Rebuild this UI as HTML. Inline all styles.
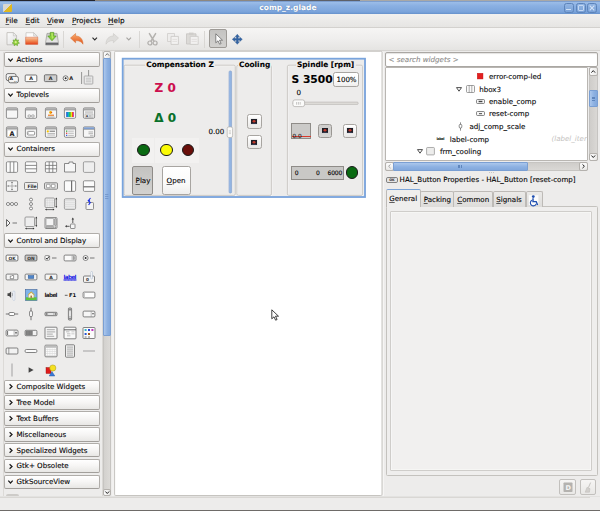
<!DOCTYPE html>
<html><head><meta charset="utf-8"><title>comp_z.glade</title>
<style>
html,body{margin:0;padding:0;}
body{width:600px;height:511px;overflow:hidden;background:#edeceb;position:relative;font-family:"DejaVu Sans","Liberation Sans",sans-serif;font-size:7.1px;color:#000;}
div,span,svg{position:absolute;box-sizing:border-box;}
svg{overflow:visible;}
svg text{font-family:"DejaVu Sans","Liberation Sans",sans-serif;}
.t{-webkit-text-stroke:0.1px currentColor;white-space:nowrap;line-height:10px;height:10px;margin-top:-5px;font-size:7.1px;}
.b{font-weight:bold;}
.hdr{border:1px solid #b0ada9;border-bottom-color:#a29f9b;border-radius:2px;background:linear-gradient(#ffffff,#f6f5f4 50%,#e8e7e5);}
.btn{border:1px solid #a8a5a1;border-radius:2.5px;background:linear-gradient(#ffffff,#f4f3f2 60%,#e8e7e5);}
.btnp{border:1px solid #8f8c88;border-radius:2px;background:linear-gradient(#c4c3c1,#d2d1cf);}
u{text-decoration:underline;text-underline-offset:1px;text-decoration-thickness:0.6px;text-decoration-color:rgba(0,0,0,0.6);}
</style></head>
<body>
<div style="left:0px;top:0px;width:600px;height:1px;background:linear-gradient(90deg,#23252c 0,#23252c 95px,#8d877f 95px,#8d877f 273px,#5d6068 273px,#5d6068 360px,#a9a8a6 360px);"></div>
<div style="left:0px;top:1px;width:600px;height:13px;background:linear-gradient(#9cbde8,#8ab0e2 35%,#7ca5dc 85%,#719cd5);border-top:1px solid #7d9fd0;border-bottom:1px solid #6a95cf;"></div>
<span class="t" style="left:259.3px;top:8.0px;color:#fff;font-weight:bold;font-size:7.5px;text-shadow:0 0 1px #3c5f94;">comp_z.glade</span>
<div style="left:3px;top:4px;width:9px;height:8px;background:linear-gradient(135deg,#d9d7d2 50%,#e0b820 50%);border-radius:1px;"></div>
<div style="left:564px;top:3px;width:10px;height:10px;border:1px solid #5d84ba;border-radius:2.5px;background:linear-gradient(#92b5e3,#7aa2d8);"></div>
<div style="left:576px;top:3px;width:10px;height:10px;border:1px solid #5d84ba;border-radius:2.5px;background:linear-gradient(#92b5e3,#7aa2d8);"></div>
<div style="left:587px;top:3px;width:10px;height:10px;border:1px solid #5d84ba;border-radius:2.5px;background:linear-gradient(#92b5e3,#7aa2d8);"></div>
<div style="left:566px;top:9px;width:5px;height:1px;background:#cfe0f5;"></div>
<div style="left:578px;top:5px;width:6px;height:6px;border:1px solid #c3d7f2;border-radius:1px;"></div>
<svg style="left:589px;top:5px" width="6" height="6" viewBox="0 0 6 6"><path d="M0.7 0.7L5.3 5.3M5.3 0.7L0.7 5.3" stroke="#d3e2f6" stroke-width="1.1" fill="none"/></svg>
<div style="left:0px;top:14px;width:600px;height:13.5px;background:linear-gradient(#f1f0ef,#e6e5e3);border-bottom:1px solid #d3d1ce;"></div>
<span class="t" style="left:5.5px;top:21.4px;font-size:7.3px;"><u>F</u>ile</span>
<span class="t" style="left:25.5px;top:21.4px;font-size:7.3px;"><u>E</u>dit</span>
<span class="t" style="left:47px;top:21.4px;font-size:7.3px;"><u>V</u>iew</span>
<span class="t" style="left:72px;top:21.4px;font-size:7.3px;"><u>P</u>rojects</span>
<span class="t" style="left:108px;top:21.4px;font-size:7.3px;"><u>H</u>elp</span>
<div style="left:0px;top:27.5px;width:600px;height:23px;background:linear-gradient(#f6f5f4,#efeeed 50%,#e5e4e2);border-bottom:1px solid #d6d4d1;"></div>
<svg style="left:5.6px;top:32px" width="13" height="14" viewBox="0 0 13 14"><defs><linearGradient id="pg" x1="0" y1="0" x2="1" y2="1"><stop offset="0" stop-color="#fdfdfd"/><stop offset="1" stop-color="#dedede"/></linearGradient></defs>
<path d="M1 0.6h6.4l3.2 3.2v9h-9.6z" fill="url(#pg)" stroke="#b4b2ae" stroke-width="0.7"/><path d="M7.4 0.6v3.2h3.2z" fill="#f2f2f2" stroke="#b4b2ae" stroke-width="0.5"/>
<path d="M9.6 6.6l1 1.9l2 -0.6l-0.7 2l1.6 1.2l-1.9 0.6l-0.1 2l-1.7 -1.1l-1.7 1.1l-0.1 -2l-1.9 -0.6l1.6 -1.2l-0.7 -2l2 0.6z" fill="#8fce3e" stroke="#5b9a1c" stroke-width="0.5"/><circle cx="9.7" cy="10.2" r="1.1" fill="#d8f08a"/></svg>
<svg style="left:25px;top:32.4px" width="14" height="13" viewBox="0 0 14 13"><defs><linearGradient id="fo" x1="0" y1="0" x2="0" y2="1"><stop offset="0" stop-color="#f6c8a6"/><stop offset="0.5" stop-color="#f08a54"/><stop offset="1" stop-color="#e5411a"/></linearGradient></defs>
<path d="M1 0.7h7.6l3.6 3.4v8h-11.2z" fill="#fbfbfb" stroke="#b9b7b3" stroke-width="0.6"/><path d="M8.6 0.7v3.4h3.6z" fill="#ededed" stroke="#b9b7b3" stroke-width="0.5"/>
<path d="M0.6 5.2h12.2v7.2h-12.2z" fill="url(#fo)" stroke="#d8502a" stroke-width="0.4"/></svg>
<svg style="left:44.6px;top:31.6px" width="14" height="14" viewBox="0 0 14 14"><defs><linearGradient id="dv" x1="0" y1="0" x2="0" y2="1"><stop offset="0" stop-color="#c9c9c7"/><stop offset="1" stop-color="#f0f0ef"/></linearGradient></defs>
<path d="M2 1.4h10l1.4 9v2.6h-12.8v-2.6z" fill="url(#dv)" stroke="#8e8e8a" stroke-width="0.6"/>
<path d="M0.8 10.6h12.4v2.2h-12.4z" fill="#55555a"/><path d="M1.4 11.9h11.2" stroke="#9a9a9a" stroke-width="0.4"/>
<path d="M5.2 0.4h3.6v3.6h2.4l-4.2 4.8l-4.2 -4.8h2.4z" fill="#86cf3a" stroke="#4c9418" stroke-width="0.6" stroke-linejoin="round"/><path d="M6.2 1.2h1.6v3.6h1.2l-2 2.3z" fill="#c8ee70" opacity="0.8"/></svg>
<div style="left:63px;top:31px;width:1px;height:17px;background:#d9d7d4;"></div>
<svg style="left:70.4px;top:32.6px" width="14" height="12" viewBox="0 0 14 12"><defs><linearGradient id="ud" x1="0" y1="0" x2="0" y2="1"><stop offset="0" stop-color="#f8b070"/><stop offset="1" stop-color="#e2501a"/></linearGradient></defs>
<path d="M0.5 5L5.6 0.5V3C10 3 13 6 13 11.2C11.5 8.8 9.5 7.6 5.6 7.6V9.8Z" fill="url(#ud)" stroke="#d66a2a" stroke-width="0.5" stroke-linejoin="round"/></svg>
<svg style="left:91.5px;top:36.5px" width="5.5" height="4" viewBox="0 0 5.5 4"><path d="M0.5 0.7L2.75 3L5 0.7" stroke="#2a2a2a" stroke-width="1.1" fill="none"/></svg>
<svg style="left:105.4px;top:32.6px" width="14" height="12" viewBox="0 0 14 12"><path d="M13.5 5L8.4 0.5V3C4 3 1 6 1 11.2C2.5 8.8 4.5 7.6 8.4 7.6V9.8Z" fill="#dedddb" stroke="#c6c4c1" stroke-width="0.5" stroke-linejoin="round"/></svg>
<svg style="left:126px;top:36.5px" width="5.5" height="4" viewBox="0 0 5.5 4"><path d="M0.5 0.7L2.75 3L5 0.7" stroke="#a5a3a0" stroke-width="1.1" fill="none"/></svg>
<div style="left:139px;top:31px;width:1px;height:17px;background:#d9d7d4;"></div>
<svg style="left:147.4px;top:32.6px" width="11" height="13" viewBox="0 0 11 13"><path d="M2.4 0.6L6.9 8M8.6 0.6L4.1 8" stroke="#b4b2af" stroke-width="1.5" fill="none" stroke-linecap="round"/>
<circle cx="2.9" cy="10" r="2" fill="none" stroke="#b0aeab" stroke-width="1.2"/><circle cx="8.1" cy="10" r="2" fill="none" stroke="#b0aeab" stroke-width="1.2"/></svg>
<svg style="left:166.8px;top:33px" width="12" height="12" viewBox="0 0 12 12"><path d="M0.5 0.5h7v8h-7z" fill="#eeedec" stroke="#cfcdca" stroke-width="0.8"/><path d="M4 3.4h7.4v8h-7.4z" fill="#f3f2f1" stroke="#c9c7c4" stroke-width="0.8"/><path d="M5.4 6.4h4.6M5.4 8.4h4.6" stroke="#d6d4d1" stroke-width="0.6"/></svg>
<svg style="left:185.6px;top:32.4px" width="13" height="13" viewBox="0 0 13 13"><path d="M0.5 1.8h9.5v10.2h-9.5z" fill="#dcdad7" stroke="#c6c4c1" stroke-width="0.8"/><path d="M3 0.6h4.5v2.2h-4.5z" fill="#cfcdca"/><path d="M4.2 4.4h8v8h-8z" fill="#f2f1f0" stroke="#cbc9c6" stroke-width="0.8"/><path d="M5.6 7.4h5.2M5.6 9.4h5.2" stroke="#d6d4d1" stroke-width="0.6"/></svg>
<div style="left:204px;top:31px;width:1px;height:17px;background:#d9d7d4;"></div>
<div class="btnp" style="left:209px;top:29px;width:18px;height:18.5px;border-color:#9d9a96;"></div>
<svg style="left:215px;top:33px" width="8" height="12" viewBox="0 0 8 12"><path d="M0.8 0.8v9l2.2 -2l1.6 3.4l1.5 -0.7l-1.6 -3.3h3z" fill="#fdfdfd" stroke="#5a5a5a" stroke-width="0.7" stroke-linejoin="round"/></svg>
<svg style="left:232.2px;top:33.7px" width="10.6" height="10.6" viewBox="0 0 12 12"><path d="M6 0.3l2.4 2.8h-1.4v1.9h1.9v-1.4l2.8 2.4l-2.8 2.4v-1.4h-1.9v1.9h1.4l-2.4 2.8l-2.4 -2.8h1.4v-1.9h-1.9v1.4l-2.8 -2.4l2.8 -2.4v1.4h1.9v-1.9h-1.4z" fill="#3465a4" stroke="#204a87" stroke-width="0.4"/></svg>
<div style="left:2.5px;top:51.5px;width:1px;height:445px;background:#dcdad7;"></div>
<div class="hdr" style="left:4px;top:52.2px;width:96px;height:15.0px;"></div>
<svg style="left:8px;top:58.05px" width="5" height="4" viewBox="0 0 5 4"><path d="M0.3 0.6L2.5 3L4.7 0.6" stroke="#1a1a1a" stroke-width="1.25" fill="none"/></svg>
<span class="t" style="left:16.5px;top:60.05px;font-size:7.1px;">Actions</span>
<div class="hdr" style="left:4px;top:87.5px;width:96px;height:15.0px;"></div>
<svg style="left:8px;top:93.35px" width="5" height="4" viewBox="0 0 5 4"><path d="M0.3 0.6L2.5 3L4.7 0.6" stroke="#1a1a1a" stroke-width="1.25" fill="none"/></svg>
<span class="t" style="left:16.5px;top:95.35px;font-size:7.1px;">Toplevels</span>
<div class="hdr" style="left:4px;top:141.5px;width:96px;height:15.0px;"></div>
<svg style="left:8px;top:147.35000000000002px" width="5" height="4" viewBox="0 0 5 4"><path d="M0.3 0.6L2.5 3L4.7 0.6" stroke="#1a1a1a" stroke-width="1.25" fill="none"/></svg>
<span class="t" style="left:16.5px;top:149.35px;font-size:7.1px;">Containers</span>
<div class="hdr" style="left:4px;top:232.7px;width:96px;height:15.0px;"></div>
<svg style="left:8px;top:238.55px" width="5" height="4" viewBox="0 0 5 4"><path d="M0.3 0.6L2.5 3L4.7 0.6" stroke="#1a1a1a" stroke-width="1.25" fill="none"/></svg>
<span class="t" style="left:16.5px;top:240.55px;font-size:7.1px;">Control and Display</span>
<div class="hdr" style="left:4px;top:379.5px;width:96px;height:14.5px;"></div>
<svg style="left:8.8px;top:384.40000000000003px" width="4" height="5" viewBox="0 0 4 5"><path d="M0.6 0.3L3 2.5L0.6 4.7" stroke="#1a1a1a" stroke-width="1.25" fill="none"/></svg>
<span class="t" style="left:16.5px;top:387.1px;font-size:7.1px;">Composite Widgets</span>
<div class="hdr" style="left:4px;top:395.35px;width:96px;height:14.5px;"></div>
<svg style="left:8.8px;top:400.25000000000006px" width="4" height="5" viewBox="0 0 4 5"><path d="M0.6 0.3L3 2.5L0.6 4.7" stroke="#1a1a1a" stroke-width="1.25" fill="none"/></svg>
<span class="t" style="left:16.5px;top:402.95px;font-size:7.1px;">Tree Model</span>
<div class="hdr" style="left:4px;top:411.2px;width:96px;height:14.5px;"></div>
<svg style="left:8.8px;top:416.1px" width="4" height="5" viewBox="0 0 4 5"><path d="M0.6 0.3L3 2.5L0.6 4.7" stroke="#1a1a1a" stroke-width="1.25" fill="none"/></svg>
<span class="t" style="left:16.5px;top:418.8px;font-size:7.1px;">Text Buffers</span>
<div class="hdr" style="left:4px;top:427.05px;width:96px;height:14.5px;"></div>
<svg style="left:8.8px;top:431.95000000000005px" width="4" height="5" viewBox="0 0 4 5"><path d="M0.6 0.3L3 2.5L0.6 4.7" stroke="#1a1a1a" stroke-width="1.25" fill="none"/></svg>
<span class="t" style="left:16.5px;top:434.65px;font-size:7.1px;">Miscellaneous</span>
<div class="hdr" style="left:4px;top:442.9px;width:96px;height:14.5px;"></div>
<svg style="left:8.8px;top:447.8px" width="4" height="5" viewBox="0 0 4 5"><path d="M0.6 0.3L3 2.5L0.6 4.7" stroke="#1a1a1a" stroke-width="1.25" fill="none"/></svg>
<span class="t" style="left:16.5px;top:450.5px;font-size:7.1px;">Specialized Widgets</span>
<div class="hdr" style="left:4px;top:458.75px;width:96px;height:14.5px;"></div>
<svg style="left:8.8px;top:463.65000000000003px" width="4" height="5" viewBox="0 0 4 5"><path d="M0.6 0.3L3 2.5L0.6 4.7" stroke="#1a1a1a" stroke-width="1.25" fill="none"/></svg>
<span class="t" style="left:16.5px;top:466.35px;font-size:7.1px;">Gtk+ Obsolete</span>
<div class="hdr" style="left:4px;top:474.59999999999997px;width:96px;height:14.5px;"></div>
<svg style="left:8px;top:480.2px" width="5" height="4" viewBox="0 0 5 4"><path d="M0.3 0.6L2.5 3L4.7 0.6" stroke="#1a1a1a" stroke-width="1.25" fill="none"/></svg>
<span class="t" style="left:16.5px;top:482.2px;font-size:7.1px;">GtkSourceView</span>
<div style="left:6px;top:494px;width:13px;height:2px;border-radius:2px 2px 0 0;background:#cdcbc8;"></div>
<div style="left:102px;top:51px;width:1px;height:445px;background:#dad8d5;"></div>
<div style="left:112px;top:51px;width:2px;height:445px;background:#f2f1f0;"></div>
<div style="left:103px;top:51px;width:8px;height:445px;background:linear-gradient(90deg,#d3d1ce,#dcdad7);border:1px solid #c6c4c1;border-radius:1.5px;"></div>
<div style="left:103px;top:51px;width:8px;height:7.5px;background:linear-gradient(90deg,#fdfdfd,#e9e8e6);border:1px solid #b4b1ad;border-radius:2px;"></div>
<svg style="left:104.8px;top:53.4px" width="4.5" height="3" viewBox="0 0 4.5 3"><path d="M0.4 2.6L2.25 0.6L4.1 2.6" stroke="#555" stroke-width="0.8" fill="none"/></svg>
<div style="left:103px;top:58px;width:8px;height:277.5px;background:linear-gradient(90deg,#abc7ec,#8db1e2 55%,#82a8dc);border:1px solid #7a9fd3;border-radius:1px;"></div>
<div style="left:103px;top:488.5px;width:8px;height:7.5px;background:linear-gradient(90deg,#fdfdfd,#e9e8e6);border:1px solid #b4b1ad;border-radius:2px;"></div>
<svg style="left:104.8px;top:491px" width="4.5" height="3" viewBox="0 0 4.5 3"><path d="M0.4 0.5L2.25 2.5L4.1 0.5" stroke="#222" stroke-width="1" fill="none"/></svg>
<svg style="left:105.4px;top:194.2px" width="3.4" height="1" viewBox="0 0 3.4 1"><rect x="0" y="0" width="3.4" height="0.7" fill="#6a8fc4"/></svg>
<svg style="left:105.4px;top:196.0px" width="3.4" height="1" viewBox="0 0 3.4 1"><rect x="0" y="0" width="3.4" height="0.7" fill="#6a8fc4"/></svg>
<svg style="left:105.4px;top:197.79999999999998px" width="3.4" height="1" viewBox="0 0 3.4 1"><rect x="0" y="0" width="3.4" height="0.7" fill="#6a8fc4"/></svg>
<svg style="left:5.3px;top:70.8px" width="14" height="14" viewBox="0 0 14 14"><rect x="1.2" y="2.6" width="9.8" height="7" rx="1.8" fill="#f4f4f4" stroke="#555" stroke-width="0.8"/><rect x="3.6" y="5.4" width="9.8" height="6.4" rx="1.8" fill="#f4f4f4" stroke="#555" stroke-width="0.8"/><text x="6.4" y="9.4" font-size="4.6" font-weight="bold" fill="#222" text-anchor="middle" >A</text><text x="10.4" y="11" font-size="3.6" font-weight="bold" fill="#222" text-anchor="middle" >..</text></svg>
<svg style="left:24.4px;top:70.8px" width="14" height="14" viewBox="0 0 14 14"><rect x="1.2" y="4" width="11.6" height="6.6" rx="1" fill="#fbfbfb" stroke="#555" stroke-width="0.8"/><text x="7" y="9.3" font-size="4.8" font-weight="bold" fill="#222" text-anchor="middle" >A</text></svg>
<svg style="left:43.6px;top:70.8px" width="14" height="14" viewBox="0 0 14 14"><rect x="0.4" y="3.8" width="12.4" height="6.8" rx="1" fill="#cfcfcf" stroke="#555" stroke-width="0.8"/><text x="6.6" y="9.2" font-size="4.8" font-weight="bold" fill="#222" text-anchor="middle" >A</text></svg>
<svg style="left:62.8px;top:70.8px" width="14" height="14" viewBox="0 0 14 14"><circle cx="2.6" cy="7.3" r="2.5" fill="#fff" stroke="#444" stroke-width="0.7"/><circle cx="2.6" cy="7.3" r="1" fill="#222"/><text x="8.2" y="9.2" font-size="5" font-weight="bold" fill="#222" text-anchor="middle" >A</text></svg>
<svg style="left:81.9px;top:70.8px" width="14" height="14" viewBox="0 0 14 14"><path d="M-0.4 1L-0.4 13" stroke="#8a8a8a" stroke-width="0.9" fill="none"/><path d="M6.6 -1L6.6 5" stroke="#8a8a8a" stroke-width="0.9" fill="none"/><rect x="2.2" y="5" width="8.6" height="8" rx="0.5" fill="#efefef" stroke="#9a9a9a" stroke-width="0.8"/><path d="M3.8 7.2L9.4 7.2" stroke="#aaa" stroke-width="0.7" fill="none"/><path d="M3.8 9L9.4 9" stroke="#aaa" stroke-width="0.7" fill="none"/><path d="M3.8 10.8L9.4 10.8" stroke="#aaa" stroke-width="0.7" fill="none"/></svg>
<svg style="left:5.3px;top:106.4px" width="14" height="14" viewBox="0 0 14 14"><rect x="1.4" y="1.9" width="11.2" height="10.4" rx="1.2" fill="#f6f6f6" stroke="#777" stroke-width="0.8"/><path d="M1.8 2.3h10.4v1.6h-10.4z" fill="#a8a8a8"/><path d="M1.4 4.1L12.6 4.1" stroke="#8a8a8a" stroke-width="0.6" fill="none"/></svg>
<svg style="left:24.4px;top:106.4px" width="14" height="14" viewBox="0 0 14 14"><rect x="1.4" y="1.9" width="11.2" height="10.4" rx="1.2" fill="#f6f6f6" stroke="#777" stroke-width="0.8"/><path d="M1.8 2.3h10.4v1.6h-10.4z" fill="#a8a8a8"/><path d="M1.4 4.1L12.6 4.1" stroke="#8a8a8a" stroke-width="0.6" fill="none"/><rect x="4" y="9" width="2.6" height="2" rx="0.8" fill="#fff" stroke="#6f6f6f" stroke-width="0.6"/><rect x="7.6" y="9" width="2.6" height="2" rx="0.8" fill="#fff" stroke="#6f6f6f" stroke-width="0.6"/></svg>
<svg style="left:43.6px;top:106.4px" width="14" height="14" viewBox="0 0 14 14"><rect x="1.4" y="1.9" width="11.2" height="10.4" rx="1.2" fill="#f6f6f6" stroke="#777" stroke-width="0.8"/><path d="M1.8 2.3h10.4v1.6h-10.4z" fill="#a8a8a8"/><path d="M1.4 4.1L12.6 4.1" stroke="#8a8a8a" stroke-width="0.6" fill="none"/><circle cx="6.6" cy="6.5" r="1.4" fill="#f5b400"/><path d="M6.8 5.8l1.8 0.7l-1.8 0.8z" fill="#e0421a"/><rect x="4" y="8.6" width="6" height="1.3" fill="#e98a3c"/><rect x="3.4" y="10.6" width="7.2" height="1" fill="#aaa"/></svg>
<svg style="left:62.8px;top:106.4px" width="14" height="14" viewBox="0 0 14 14"><rect x="1.4" y="1.9" width="11.2" height="10.4" rx="1.2" fill="#f6f6f6" stroke="#777" stroke-width="0.8"/><path d="M1.8 2.3h10.4v1.6h-10.4z" fill="#a8a8a8"/><path d="M1.4 4.1L12.6 4.1" stroke="#8a8a8a" stroke-width="0.6" fill="none"/><defs><linearGradient id="rb" x1="0" x2="1"><stop offset="0" stop-color="#1d4ed8"/><stop offset="0.3" stop-color="#10b3c8"/><stop offset="0.5" stop-color="#35c22e"/><stop offset="0.7" stop-color="#f0e020"/><stop offset="0.85" stop-color="#f03a1a"/><stop offset="1" stop-color="#c010c0"/></linearGradient></defs><rect x="3.2" y="6" width="7.6" height="5" fill="url(#rb)"/></svg>
<svg style="left:81.9px;top:106.4px" width="14" height="14" viewBox="0 0 14 14"><rect x="1.4" y="1.9" width="11.2" height="10.4" rx="1.2" fill="#f6f6f6" stroke="#777" stroke-width="0.8"/><path d="M1.8 2.3h10.4v1.6h-10.4z" fill="#a8a8a8"/><path d="M1.4 4.1L12.6 4.1" stroke="#8a8a8a" stroke-width="0.6" fill="none"/><rect x="3" y="5.2" width="8" height="2.2" fill="#cfcfcf"/><rect x="3" y="8" width="8" height="3.2" fill="#e4e4e4" stroke="#999" stroke-width="0.4"/><text x="5" y="10.8" font-size="2.6" font-weight="bold" fill="#222" text-anchor="middle" >A</text><path d="M7 10L9.5 10" stroke="#777" stroke-width="0.6" fill="none"/></svg>
<svg style="left:5.3px;top:125.0px" width="14" height="14" viewBox="0 0 14 14"><rect x="1.4" y="1.9" width="11.2" height="10.4" rx="1.2" fill="#f6f6f6" stroke="#777" stroke-width="0.8"/><path d="M1.8 2.3h10.4v1.6h-10.4z" fill="#a8a8a8"/><path d="M1.4 4.1L12.6 4.1" stroke="#8a8a8a" stroke-width="0.6" fill="none"/><rect x="2.5" y="5" width="9" height="6.5" rx="0" fill="#fff" stroke="#aaa" stroke-width="0.4"/><text x="7" y="11" font-size="6.5" font-weight="bold" fill="#222" text-anchor="middle" >A</text></svg>
<svg style="left:24.4px;top:125.0px" width="14" height="14" viewBox="0 0 14 14"><rect x="1.4" y="1.9" width="11.2" height="10.4" rx="1.2" fill="#f6f6f6" stroke="#777" stroke-width="0.8"/><path d="M1.8 2.3h10.4v1.6h-10.4z" fill="#a8a8a8"/><path d="M1.4 4.1L12.6 4.1" stroke="#8a8a8a" stroke-width="0.6" fill="none"/><rect x="3.4" y="6.4" width="7.2" height="3.6" rx="1" fill="#fff" stroke="#6f6f6f" stroke-width="0.7"/><path d="M4.6 7.3L4.6 9.2" stroke="#888" stroke-width="0.5" fill="none"/></svg>
<svg style="left:43.6px;top:125.0px" width="14" height="14" viewBox="0 0 14 14"><rect x="1.4" y="1.9" width="11.2" height="10.4" rx="1.2" fill="#f6f6f6" stroke="#777" stroke-width="0.8"/><path d="M1.8 2.3h10.4v1.6h-10.4z" fill="#a8a8a8"/><path d="M1.4 4.1L12.6 4.1" stroke="#8a8a8a" stroke-width="0.6" fill="none"/><circle cx="3.8" cy="6.4" r="1.1" fill="#f5c400"/><rect x="5.6" y="5.6" width="5.4" height="1.4" fill="#999"/><rect x="3.4" y="8" width="7.6" height="0.9" fill="#b5b5b5"/><rect x="3.4" y="9.6" width="7.6" height="0.9" fill="#b5b5b5"/></svg>
<svg style="left:62.8px;top:125.0px" width="14" height="14" viewBox="0 0 14 14"><rect x="1.4" y="1.9" width="11.2" height="10.4" rx="1.2" fill="#f6f6f6" stroke="#777" stroke-width="0.8"/><path d="M1.8 2.3h10.4v1.6h-10.4z" fill="#a8a8a8"/><path d="M1.4 4.1L12.6 4.1" stroke="#8a8a8a" stroke-width="0.6" fill="none"/><rect x="3" y="5.5" width="1.3" height="1.3" fill="#3aa53a"/><rect x="3" y="7.6" width="1.3" height="1.3" fill="#d93a3a"/><rect x="3" y="9.7" width="1.3" height="1.3" fill="#3a5fd9"/><rect x="5.2" y="5.7" width="5.6" height="0.9" fill="#b5b5b5"/><rect x="5.2" y="7.8" width="5.6" height="0.9" fill="#b5b5b5"/><rect x="5.2" y="9.9" width="5.6" height="0.9" fill="#b5b5b5"/></svg>
<svg style="left:81.9px;top:125.0px" width="14" height="14" viewBox="0 0 14 14"><rect x="1.4" y="1.9" width="11.2" height="10.4" rx="1.2" fill="#f6f6f6" stroke="#777" stroke-width="0.8"/><path d="M1.8 2.3h10.4v2h-10.4z" fill="#7ea1d6"/><path d="M1.4 4.4L12.6 4.4" stroke="#8a8a8a" stroke-width="0.6" fill="none"/><rect x="6.5" y="6.5" width="4.5" height="0.9" fill="#aaa"/><rect x="6.5" y="8.3" width="4.5" height="0.9" fill="#aaa"/><rect x="8" y="10.2" width="3.4" height="1.2" fill="#bbb"/></svg>
<svg style="left:5.3px;top:160.3px" width="14" height="14" viewBox="0 0 14 14"><rect x="1.4" y="1.8" width="11.2" height="10.6" rx="1.2" fill="#fbfbfb" stroke="#777" stroke-width="0.8"/><path d="M5.2 1.8L5.2 12.4" stroke="#6f6f6f" stroke-width="0.8" fill="none"/><path d="M8.8 1.8L8.8 12.4" stroke="#6f6f6f" stroke-width="0.8" fill="none"/></svg>
<svg style="left:24.4px;top:160.3px" width="14" height="14" viewBox="0 0 14 14"><rect x="1.4" y="1.8" width="11.2" height="10.6" rx="1.2" fill="#fbfbfb" stroke="#777" stroke-width="0.8"/><path d="M1.4 5.4L12.6 5.4" stroke="#6f6f6f" stroke-width="0.8" fill="none"/><path d="M1.4 8.8L12.6 8.8" stroke="#6f6f6f" stroke-width="0.8" fill="none"/></svg>
<svg style="left:43.6px;top:160.3px" width="14" height="14" viewBox="0 0 14 14"><rect x="1.4" y="1.8" width="11.2" height="10.6" rx="1.2" fill="#fbfbfb" stroke="#777" stroke-width="0.8"/><path d="M5.2 1.8L5.2 12.4" stroke="#6f6f6f" stroke-width="0.8" fill="none"/><path d="M8.8 1.8L8.8 12.4" stroke="#6f6f6f" stroke-width="0.8" fill="none"/><path d="M1.4 5.4L12.6 5.4" stroke="#6f6f6f" stroke-width="0.8" fill="none"/><path d="M1.4 8.8L12.6 8.8" stroke="#6f6f6f" stroke-width="0.8" fill="none"/></svg>
<svg style="left:62.8px;top:160.3px" width="14" height="14" viewBox="0 0 14 14"><path d="M1.5 3.5h4.5v-1.5h4v1.5h2.5v8.5h-11z" fill="#f6f6f6" stroke="#6f6f6f" stroke-width="0.8" stroke-linejoin="round"/></svg>
<svg style="left:81.9px;top:160.3px" width="14" height="14" viewBox="0 0 14 14"><rect x="1.4" y="1.8" width="11.2" height="10.6" rx="1.2" fill="#eeeeee" stroke="#8a8a8a" stroke-width="0.8"/></svg>
<svg style="left:5.3px;top:178.8px" width="14" height="14" viewBox="0 0 14 14"><rect x="1.4" y="1.8" width="11.2" height="10.6" rx="1.2" fill="#f4f4f4" stroke="#777" stroke-width="0.8"/><path d="M2.5 7L11.5 7" stroke="#888" stroke-width="0.6" fill="none"/><path d="M7 3L7 11" stroke="#888" stroke-width="0.6" fill="none"/><path d="M7 2.6l-1 1.4h2zM7 11.4l-1 -1.4h2zM2.2 7l1.4 -1v2zM11.8 7l-1.4 -1v2z" fill="#777"/></svg>
<svg style="left:24.4px;top:178.8px" width="14" height="14" viewBox="0 0 14 14"><rect x="0.5" y="3.5" width="13" height="7" rx="1" fill="#eee" stroke="#6f6f6f" stroke-width="0.8"/><text x="8" y="9" font-size="4.6" font-weight="bold" fill="#222" text-anchor="middle" textLength="9">File</text></svg>
<svg style="left:43.6px;top:178.8px" width="14" height="14" viewBox="0 0 14 14"><rect x="0.5" y="3.8" width="13" height="6.4" rx="1" fill="#e4e4e4" stroke="#6f6f6f" stroke-width="0.8"/><rect x="2.5" y="5.3" width="3.6" height="3.4" rx="0.6" fill="#fff" stroke="#6f6f6f" stroke-width="0.6"/><rect x="7.4" y="5.3" width="3.6" height="3.4" rx="0.6" fill="#fff" stroke="#6f6f6f" stroke-width="0.6"/></svg>
<svg style="left:62.8px;top:178.8px" width="14" height="14" viewBox="0 0 14 14"><rect x="1.4" y="1.8" width="11.2" height="10.6" rx="1.2" fill="#fbfbfb" stroke="#777" stroke-width="0.8"/><path d="M8.6 1.8L8.6 12.4" stroke="#6f6f6f" stroke-width="1.2" fill="none"/></svg>
<svg style="left:81.9px;top:178.8px" width="14" height="14" viewBox="0 0 14 14"><rect x="1.4" y="1.8" width="11.2" height="10.6" rx="1.2" fill="#fbfbfb" stroke="#777" stroke-width="0.8"/><path d="M1.4 7.8L12.6 7.8" stroke="#6f6f6f" stroke-width="1.2" fill="none"/></svg>
<svg style="left:5.3px;top:197.3px" width="14" height="14" viewBox="0 0 14 14"><ellipse cx="3" cy="7" rx="1.6" ry="1.5" fill="#fff" stroke="#5a5a5a" stroke-width="0.7"/><ellipse cx="7" cy="7" rx="1.6" ry="1.5" fill="#fff" stroke="#5a5a5a" stroke-width="0.7"/><ellipse cx="11" cy="7" rx="1.6" ry="1.5" fill="#fff" stroke="#5a5a5a" stroke-width="0.7"/></svg>
<svg style="left:24.4px;top:197.3px" width="14" height="14" viewBox="0 0 14 14"><ellipse cx="7" cy="2.6" rx="1.5" ry="1.5" fill="#fff" stroke="#5a5a5a" stroke-width="0.7"/><ellipse cx="7" cy="7" rx="1.5" ry="1.5" fill="#fff" stroke="#5a5a5a" stroke-width="0.7"/><ellipse cx="7" cy="11.4" rx="1.5" ry="1.5" fill="#fff" stroke="#5a5a5a" stroke-width="0.7"/></svg>
<svg style="left:43.6px;top:197.3px" width="14" height="14" viewBox="0 0 14 14"><rect x="1" y="1" width="9.5" height="9.5" rx="1" fill="#eee" stroke="#888" stroke-width="0.8"/><path d="M1.5 3.4L10 3.4" stroke="#cfcfcf" stroke-width="0.4" fill="none"/><path d="M3.4 1.5L3.4 10" stroke="#cfcfcf" stroke-width="0.4" fill="none"/><path d="M1.5 5.8L10 5.8" stroke="#cfcfcf" stroke-width="0.4" fill="none"/><path d="M5.8 1.5L5.8 10" stroke="#cfcfcf" stroke-width="0.4" fill="none"/><path d="M1.5 8.2L10 8.2" stroke="#cfcfcf" stroke-width="0.4" fill="none"/><path d="M8.2 1.5L8.2 10" stroke="#cfcfcf" stroke-width="0.4" fill="none"/><path d="M12.3 1.5L12.3 10" stroke="#333" stroke-width="0.7" fill="none"/><path d="M12.3 0.6l-1 1.6h2zM12.3 10.9l-1 -1.6h2z" fill="#333"/><path d="M2 12.6L9.5 12.6" stroke="#333" stroke-width="0.7" fill="none"/><path d="M1 12.6l1.6 -1v2zM10.5 12.6l-1.6 -1v2z" fill="#333"/></svg>
<svg style="left:62.8px;top:197.3px" width="14" height="14" viewBox="0 0 14 14"><rect x="1.4" y="1.8" width="11.2" height="10.6" rx="1.2" fill="#f1f1f1" stroke="#8a8a8a" stroke-width="0.8"/><path d="M1.5 3.5L12.5 3.5" stroke="#d2d2d2" stroke-width="0.4" fill="none"/><path d="M3 2L3 12" stroke="#d2d2d2" stroke-width="0.4" fill="none"/><path d="M1.5 5.5L12.5 5.5" stroke="#d2d2d2" stroke-width="0.4" fill="none"/><path d="M5 2L5 12" stroke="#d2d2d2" stroke-width="0.4" fill="none"/><path d="M1.5 7.5L12.5 7.5" stroke="#d2d2d2" stroke-width="0.4" fill="none"/><path d="M7 2L7 12" stroke="#d2d2d2" stroke-width="0.4" fill="none"/><path d="M1.5 9.5L12.5 9.5" stroke="#d2d2d2" stroke-width="0.4" fill="none"/><path d="M9 2L9 12" stroke="#d2d2d2" stroke-width="0.4" fill="none"/><path d="M1.5 11.5L12.5 11.5" stroke="#d2d2d2" stroke-width="0.4" fill="none"/><path d="M11 2L11 12" stroke="#d2d2d2" stroke-width="0.4" fill="none"/></svg>
<svg style="left:81.9px;top:197.3px" width="14" height="14" viewBox="0 0 14 14"><rect x="4" y="5.5" width="7.5" height="7" rx="0.8" fill="#f4f4f4" stroke="#777" stroke-width="0.8"/><path d="M8.5 1L6.3 3.6L8.3 5.6L6.6 8" stroke="#1a2ee0" stroke-width="1.1" fill="none"/><path d="M5.6 3.6l2.2 -1.2v2.4z" fill="#1a2ee0"/></svg>
<svg style="left:5.3px;top:216.0px" width="14" height="14" viewBox="0 0 14 14"><path d="M1.6 3.6v6.8l3.4 -3.4z" fill="#fff" stroke="#333" stroke-width="0.8" stroke-linejoin="round"/><path d="M7.5 7L12 7" stroke="#777" stroke-width="1" fill="none"/></svg>
<svg style="left:24.4px;top:216.0px" width="14" height="14" viewBox="0 0 14 14"><rect x="1" y="1" width="9.5" height="9.5" rx="1" fill="#eee" stroke="#888" stroke-width="0.8"/><path d="M12.3 1.5L12.3 10" stroke="#333" stroke-width="0.7" fill="none"/><path d="M12.3 0.6l-1 1.6h2zM12.3 10.9l-1 -1.6h2z" fill="#333"/><path d="M2 12.6L9.5 12.6" stroke="#333" stroke-width="0.7" fill="none"/><path d="M1 12.6l1.6 -1v2zM10.5 12.6l-1.6 -1v2z" fill="#333"/></svg>
<svg style="left:43.6px;top:216.0px" width="14" height="14" viewBox="0 0 14 14"><rect x="1" y="1.5" width="12" height="11" rx="1" fill="#eee" stroke="#777" stroke-width="0.8"/><rect x="2" y="2.5" width="7.6" height="7" rx="0.3" fill="#f4f4f4" stroke="#888" stroke-width="0.6"/><rect x="10.6" y="2.5" width="1.6" height="7" rx="0.5" fill="#ccc" stroke="#666" stroke-width="0.5"/><rect x="2" y="10.4" width="7.6" height="1.6" rx="0.5" fill="#ccc" stroke="#666" stroke-width="0.5"/><rect x="10.5" y="10.4" width="1.8" height="1.7" fill="#999"/></svg>
<svg style="left:62.8px;top:216.0px" width="14" height="14" viewBox="0 0 14 14"><rect x="7.5" y="8" width="4.5" height="4.5" rx="0.5" fill="#f6f6f6" stroke="#777" stroke-width="0.8"/><path d="M9.8 3L9.8 7" stroke="#333" stroke-width="0.8" fill="none"/><path d="M9.8 1.6l-1.2 1.8h2.4z" fill="#333"/><path d="M3.5 10.3L6.6 10.3" stroke="#333" stroke-width="0.8" fill="none"/><path d="M2 10.3l1.8 -1.2v2.4z" fill="#333"/></svg>
<svg style="left:5.3px;top:251.4px" width="14" height="14" viewBox="0 0 14 14"><rect x="1.1" y="4.1" width="11.8" height="5.8" rx="1" fill="#fbfbfb" stroke="#555" stroke-width="0.8"/><text x="7" y="9" font-size="4.4" font-weight="bold" fill="#333" text-anchor="middle" >OK</text></svg>
<svg style="left:24.4px;top:251.4px" width="14" height="14" viewBox="0 0 14 14"><rect x="1.1" y="4.1" width="11.8" height="5.8" rx="1" fill="#c9c9c9" stroke="#555" stroke-width="0.8"/><text x="7" y="9" font-size="4.4" font-weight="bold" fill="#333" text-anchor="middle" >ON</text></svg>
<svg style="left:43.6px;top:251.4px" width="14" height="14" viewBox="0 0 14 14"><rect x="1" y="4.6" width="4.6" height="4.6" rx="0.8" fill="#fff" stroke="#666" stroke-width="0.7"/><path d="M2 7l1.2 1.2l2 -3" stroke="#222" stroke-width="0.9" fill="none"/><path d="M8 7L12.5 7" stroke="#777" stroke-width="1" fill="none"/></svg>
<svg style="left:62.8px;top:251.4px" width="14" height="14" viewBox="0 0 14 14"><rect x="1.1" y="4.1" width="11.8" height="5.8" rx="1" fill="#fbfbfb" stroke="#666" stroke-width="0.8"/><rect x="9" y="4.4" width="3.8" height="5.2" rx="0.5" fill="#e0e0e0" stroke="#888" stroke-width="0.5"/><path d="M10.9 5l-1 1.4h2zM10.9 9l-1 -1.4h2z" fill="#555"/></svg>
<svg style="left:81.9px;top:251.4px" width="14" height="14" viewBox="0 0 14 14"><circle cx="3.6" cy="7" r="2.5" fill="#fff" stroke="#555" stroke-width="0.7"/><circle cx="3.6" cy="7" r="1" fill="#222"/><path d="M8 7L12.5 7" stroke="#777" stroke-width="1" fill="none"/></svg>
<svg style="left:5.3px;top:269.9px" width="14" height="14" viewBox="0 0 14 14"><rect x="1.1" y="4.1" width="11.8" height="5.8" rx="1" fill="#f4f4f4" stroke="#666" stroke-width="0.8"/><path d="M5.3 8.7v-2.6h1.3l0.5 -0.6h1.5v3.2z" fill="#fff" stroke="#555" stroke-width="0.6"/></svg>
<svg style="left:24.4px;top:269.9px" width="14" height="14" viewBox="0 0 14 14"><rect x="1.1" y="4.1" width="11.8" height="5.8" rx="1" fill="#f4f4f4" stroke="#666" stroke-width="0.8"/><rect x="4.2" y="5.5" width="5.6" height="3" fill="#4d84c9" stroke="#2e5a96" stroke-width="0.5"/></svg>
<svg style="left:43.6px;top:269.9px" width="14" height="14" viewBox="0 0 14 14"><rect x="1.1" y="4.1" width="11.8" height="5.8" rx="1" fill="#f4f4f4" stroke="#666" stroke-width="0.8"/><text x="7" y="9" font-size="4.6" font-weight="bold" fill="#222" text-anchor="middle" >A</text></svg>
<svg style="left:62.8px;top:269.9px" width="14" height="14" viewBox="0 0 14 14"><text x="7" y="8.8" font-size="5.6" font-weight="bold" fill="#1a1ae6" text-anchor="middle" text-decoration="underline" textLength="13">label</text><path d="M0.6 9.8L13.4 9.8" stroke="#1a1ae6" stroke-width="0.7" fill="none"/></svg>
<svg style="left:81.9px;top:269.9px" width="14" height="14" viewBox="0 0 14 14"><rect x="1.5" y="6" width="11" height="6.4" rx="1" fill="#f4f4f4" stroke="#666" stroke-width="0.8"/><text x="5.5" y="11.2" font-size="4.2" font-weight="bold" fill="#333" text-anchor="middle" >0</text><rect x="8.8" y="1.5" width="1.7" height="7.5" rx="0.8" fill="#fdfdfd" stroke="#9fb0c8" stroke-width="0.5"/></svg>
<svg style="left:5.3px;top:288.4px" width="14" height="14" viewBox="0 0 14 14"><path d="M2.5 5.3h1.6l2 -1.9v6.6l-2 -1.9h-1.6z" fill="#444"/><path d="M7 5c0.7 0.7 0.7 2.4 0 3.1" stroke="#666" stroke-width="0.6" fill="none"/><rect x="8" y="3" width="1.8" height="9.5" rx="0.9" fill="#fdfdfd" stroke="#a8b8d0" stroke-width="0.5"/></svg>
<svg style="left:24.4px;top:288.4px" width="14" height="14" viewBox="0 0 14 14"><rect x="1.5" y="1.5" width="11.5" height="11" fill="#7fb3ea" stroke="#4f6fa0" stroke-width="0.7"/><rect x="1.9" y="9.3" width="10.7" height="2.9" fill="#5fc43a"/><path d="M4.5 9.8v-3l2.7 -2.4l2.7 2.4v3z" fill="#fdf6d8" stroke="#b09a50" stroke-width="0.4"/><path d="M3.9 6.9l3.3 -3l3.3 3" stroke="#e0b020" stroke-width="0.9" fill="none"/><rect x="6.5" y="7.6" width="1.4" height="2.2" fill="#9a6a3a"/></svg>
<svg style="left:43.6px;top:288.4px" width="14" height="14" viewBox="0 0 14 14"><text x="7" y="8.8" font-size="5.6" font-weight="bold" fill="#222" text-anchor="middle" textLength="13">label</text></svg>
<svg style="left:62.8px;top:288.4px" width="14" height="14" viewBox="0 0 14 14"><path d="M1.8 7.3L4.6 7.3" stroke="#555" stroke-width="0.9" fill="none"/><text x="9.6" y="9.2" font-size="5.3" font-weight="bold" fill="#111" text-anchor="middle" >F1</text></svg>
<svg style="left:81.9px;top:288.4px" width="14" height="14" viewBox="0 0 14 14"><rect x="1.1" y="4.1" width="11.8" height="5.8" rx="1" fill="#fdfdfd" stroke="#666" stroke-width="0.8"/><path d="M2.3 5L2.3 9" stroke="#aaa" stroke-width="0.8" fill="none"/></svg>
<svg style="left:5.3px;top:307.0px" width="14" height="14" viewBox="0 0 14 14"><path d="M0.8 7L13.2 7" stroke="#666" stroke-width="0.9" fill="none"/><rect x="4" y="5.5" width="5.5" height="3" rx="1" fill="#fff" stroke="#555" stroke-width="0.7"/></svg>
<svg style="left:24.4px;top:307.0px" width="14" height="14" viewBox="0 0 14 14"><path d="M7 0.8L7 13.2" stroke="#666" stroke-width="0.9" fill="none"/><rect x="5.6" y="4" width="2.8" height="5.5" rx="1" fill="#fff" stroke="#555" stroke-width="0.7"/></svg>
<svg style="left:43.6px;top:307.0px" width="14" height="14" viewBox="0 0 14 14"><rect x="1" y="5.3" width="12" height="3.4" rx="0.8" fill="#d9d9d9" stroke="#555" stroke-width="0.7"/><rect x="3.6" y="5.9" width="6.2" height="2.2" rx="0.5" fill="#fff" stroke="#777" stroke-width="0.5"/><path d="M1.6 7l1.2 -1v2zM12.4 7l-1.2 -1v2z" fill="#444"/></svg>
<svg style="left:62.8px;top:307.0px" width="14" height="14" viewBox="0 0 14 14"><rect x="5.4" y="1" width="3.2" height="12" rx="0.8" fill="#d9d9d9" stroke="#555" stroke-width="0.7"/><rect x="5.9" y="3.6" width="2.2" height="6.2" rx="0.5" fill="#fff" stroke="#777" stroke-width="0.5"/><path d="M7 1.6l-1 1.2h2zM7 12.4l-1 -1.2h2z" fill="#444"/></svg>
<svg style="left:81.9px;top:307.0px" width="14" height="14" viewBox="0 0 14 14"><rect x="1.1" y="4.1" width="11.8" height="5.8" rx="1" fill="#f6f6f6" stroke="#666" stroke-width="0.8"/><path d="M9.2 4L9.2 10" stroke="#999" stroke-width="0.6" fill="none"/><path d="M10 6.2h2l-1 1.6z" fill="#333"/></svg>
<svg style="left:5.3px;top:325.6px" width="14" height="14" viewBox="0 0 14 14"><rect x="1.1" y="4.1" width="11.8" height="5.8" rx="1" fill="#fdfdfd" stroke="#666" stroke-width="0.8"/><path d="M2.6 5L2.6 9" stroke="#444" stroke-width="0.8" fill="none"/><rect x="9" y="4.4" width="3.8" height="5.2" rx="0.8" fill="#e6e6e6" stroke="#888" stroke-width="0.5"/><path d="M10 6.3h2l-1 1.6z" fill="#333"/></svg>
<svg style="left:24.4px;top:325.6px" width="14" height="14" viewBox="0 0 14 14"><rect x="1.1" y="4.3" width="11.8" height="5.4" rx="1" fill="#f2f2f2" stroke="#666" stroke-width="0.8"/><rect x="1.4" y="4.8" width="7.4" height="4.4" rx="0.8" fill="#8c8c8c"/><path d="M2.6 4.8L2.6 9.2" stroke="#6a6a6a" stroke-width="0.5" fill="none"/><path d="M4.1 4.8L4.1 9.2" stroke="#6a6a6a" stroke-width="0.5" fill="none"/><path d="M5.6 4.8L5.6 9.2" stroke="#6a6a6a" stroke-width="0.5" fill="none"/><path d="M7.1 4.8L7.1 9.2" stroke="#6a6a6a" stroke-width="0.5" fill="none"/></svg>
<svg style="left:43.6px;top:325.6px" width="14" height="14" viewBox="0 0 14 14"><rect x="1" y="1.2" width="12" height="11.6" rx="0.8" fill="#f6f6f6" stroke="#666" stroke-width="0.8"/><rect x="2.8" y="3.2" width="8" height="1" fill="#aaa"/><rect x="2.8" y="5.4" width="8.4" height="1" fill="#aaa"/><rect x="2.8" y="7.6" width="6" height="1" fill="#aaa"/><rect x="2.8" y="9.8" width="7.4" height="1" fill="#aaa"/></svg>
<svg style="left:62.8px;top:325.6px" width="14" height="14" viewBox="0 0 14 14"><rect x="1" y="1.2" width="12" height="11.6" rx="0.8" fill="#f9f9f9" stroke="#666" stroke-width="0.8"/><path d="M1 3.8L13 3.8" stroke="#555" stroke-width="0.9" fill="none"/><rect x="3" y="5.4" width="3.4" height="0.9" fill="#b5b5b5"/><rect x="4" y="7.4" width="3.4" height="0.9" fill="#b5b5b5"/><rect x="4" y="9.4" width="3.4" height="0.9" fill="#b5b5b5"/><rect x="8.4" y="5.4" width="3" height="0.9" fill="#c5c5c5"/><rect x="8.4" y="7.4" width="3" height="0.9" fill="#c5c5c5"/></svg>
<svg style="left:81.9px;top:325.6px" width="14" height="14" viewBox="0 0 14 14"><rect x="1" y="1.5" width="12" height="11" rx="0.8" fill="#fbfbfb" stroke="#666" stroke-width="0.8"/><rect x="2.6" y="3" width="2" height="2" fill="#2fb6c8"/><rect x="6" y="3" width="2" height="2" fill="#2a3fd0"/><rect x="9.4" y="3" width="2" height="2" fill="#c02fc0"/><rect x="2.6" y="7" width="2" height="2" fill="#2a55d0"/><rect x="6" y="7" width="2" height="2" fill="#a05a1a"/><rect x="2.6" y="10" width="2" height="2" fill="#bbb"/><rect x="6" y="10" width="2" height="2" fill="#bbb"/></svg>
<svg style="left:5.3px;top:344.2px" width="14" height="14" viewBox="0 0 14 14"><rect x="1.1" y="4" width="11.8" height="6" rx="1" fill="#f2f2f2" stroke="#666" stroke-width="0.8"/><path d="M3.8 3.8L3.8 10.2" stroke="#777" stroke-width="0.7" fill="none"/></svg>
<svg style="left:24.4px;top:344.2px" width="14" height="14" viewBox="0 0 14 14"><rect x="1.1" y="5.5" width="11.8" height="3" rx="1.2" fill="#fbfbfb" stroke="#666" stroke-width="0.8"/></svg>
<svg style="left:43.6px;top:344.2px" width="14" height="14" viewBox="0 0 14 14"><rect x="1" y="1.2" width="12" height="11.6" rx="0.8" fill="#fbfbfb" stroke="#666" stroke-width="0.8"/><rect x="1.4" y="1.6" width="11.2" height="2.2" fill="#bdbdbd"/><path d="M2 5.5L12 5.5" stroke="#d0d0d0" stroke-width="0.5" fill="none"/><path d="M2 7.5L12 7.5" stroke="#d0d0d0" stroke-width="0.5" fill="none"/><path d="M2 9.5L12 9.5" stroke="#d0d0d0" stroke-width="0.5" fill="none"/><path d="M2 11.5L12 11.5" stroke="#d0d0d0" stroke-width="0.5" fill="none"/><path d="M3.5 4.5L3.5 12" stroke="#d8d8d8" stroke-width="0.5" fill="none"/><path d="M5.9 4.5L5.9 12" stroke="#d8d8d8" stroke-width="0.5" fill="none"/><path d="M8.3 4.5L8.3 12" stroke="#d8d8d8" stroke-width="0.5" fill="none"/><path d="M10.7 4.5L10.7 12" stroke="#d8d8d8" stroke-width="0.5" fill="none"/></svg>
<svg style="left:62.8px;top:344.2px" width="14" height="14" viewBox="0 0 14 14"><rect x="2.5" y="0.8" width="9" height="12.4" rx="0.8" fill="#eee" stroke="#666" stroke-width="0.8"/><rect x="4" y="2.6" width="6" height="1" fill="#b0b0b0"/><rect x="4" y="4.6" width="6" height="1" fill="#b0b0b0"/><rect x="4" y="6.6" width="6" height="1" fill="#b0b0b0"/><rect x="4" y="8.6" width="6" height="1" fill="#b0b0b0"/><rect x="4" y="10.6" width="6" height="1" fill="#b0b0b0"/></svg>
<svg style="left:81.9px;top:344.2px" width="14" height="14" viewBox="0 0 14 14"><path d="M1 7L13 7" stroke="#999" stroke-width="0.9" fill="none"/></svg>
<svg style="left:5.3px;top:362.8px" width="14" height="14" viewBox="0 0 14 14"><path d="M7 0.5L7 13.5" stroke="#999" stroke-width="0.9" fill="none"/></svg>
<svg style="left:24.4px;top:362.8px" width="14" height="14" viewBox="0 0 14 14"><path d="M4.6 4.2v5.6l5 -2.8z" fill="#444"/></svg>
<svg style="left:43.6px;top:362.8px" width="14" height="14" viewBox="0 0 14 14"><rect x="2" y="4.5" width="5" height="6" fill="#e01b1b" stroke="#8a0f0f" stroke-width="0.4"/><path d="M8 8.6l2.8 4.4h-5.6z" fill="#3a7ad9" stroke="#1d4a94" stroke-width="0.4"/><circle cx="8.8" cy="5" r="3.1" fill="#f5e020" stroke="#a8961a" stroke-width="0.5"/></svg>
<svg style="left:0px;top:0px" width="600" height="511" viewBox="0 0 600 511"><rect x="114.6" y="51.25" width="267.4" height="444.25" rx="1.2" fill="#ffffff" stroke="#c6c4c0" stroke-width="1"/></svg>
<div style="left:122px;top:58px;width:244px;height:140px;background:#edeceb;"></div>
<svg style="left:0;top:0" width="600" height="511" viewBox="0 0 600 511"><rect x="124.69999999999999" y="65.8" width="111.20000000000002" height="130.2" rx="1.5" fill="none" stroke="#fbfbfa" stroke-width="0.6"/><rect x="124.1" y="65.2" width="111.20000000000002" height="130.2" rx="1.5" fill="none" stroke="#bdbab6" stroke-width="0.7"/><rect x="237.5" y="65.8" width="34.49999999999997" height="130.2" rx="1.5" fill="none" stroke="#fbfbfa" stroke-width="0.6"/><rect x="236.9" y="65.2" width="34.49999999999997" height="130.2" rx="1.5" fill="none" stroke="#bdbab6" stroke-width="0.7"/><rect x="288.0" y="65.8" width="75.20000000000005" height="130.2" rx="1.5" fill="none" stroke="#fbfbfa" stroke-width="0.6"/><rect x="287.4" y="65.2" width="75.20000000000005" height="130.2" rx="1.5" fill="none" stroke="#bdbab6" stroke-width="0.7"/><rect x="122.7" y="58.7" width="242.3" height="138.3" fill="none" stroke="#78a4dd" stroke-width="1.8"/></svg>
<div style="left:145px;top:60px;width:70px;height:9px;background:#edeceb;"></div>
<span class="t" style="left:146.3px;top:64.6px;font-weight:bold;font-size:7.4px;color:#000;">Compensation Z</span>
<span class="t" style="left:154.6px;top:88.3px;font-weight:bold;font-size:12px;color:#cc0e4e;line-height:14px;height:14px;margin-top:-7px;">Z 0</span>
<span class="t" style="left:154.2px;top:118.1px;font-weight:bold;font-size:12px;color:#08702a;line-height:14px;height:14px;margin-top:-7px;">Δ 0</span>
<svg style="left:0px;top:0px" width="600" height="511" viewBox="0 0 600 511"><defs><linearGradient id="vs" x1="0" x2="1"><stop offset="0" stop-color="#a6c3ea"/><stop offset="1" stop-color="#84aadc"/></linearGradient></defs><rect x="229" y="70.9" width="2.6" height="122.2" rx="1.2" fill="url(#vs)" stroke="#86a3cd" stroke-width="0.6"/><rect x="227.2" y="126.9" width="5.4" height="10.6" rx="1.6" fill="#fbfbfa" stroke="#b2afab" stroke-width="0.7"/><path d="M228.8 130.8h2.2M228.8 132.2h2.2M228.8 133.6h2.2" stroke="#b0aeab" stroke-width="0.5" fill="none"/></svg>
<span class="t" style="left:208.5px;top:132.3px;font-size:7.1px;">0.00</span>
<div style="left:132.2px;top:137.5px;width:22.2px;height:25.5px;background:#f2f1f0;"></div>
<div style="left:137.2px;top:143.89999999999998px;width:12.6px;height:12.6px;border-radius:50%;background:#0a6a12;border:0.8px solid #1a1a1a;"></div>
<div style="left:155.0px;top:137.5px;width:22.2px;height:25.5px;background:#f2f1f0;"></div>
<div style="left:160.0px;top:143.89999999999998px;width:12.6px;height:12.6px;border-radius:50%;background:#fbfb05;border:0.8px solid #1a1a1a;"></div>
<div style="left:176.7px;top:137.5px;width:22.2px;height:25.5px;background:#f2f1f0;"></div>
<div style="left:181.7px;top:143.89999999999998px;width:12.6px;height:12.6px;border-radius:50%;background:#6a0f0a;border:0.8px solid #1a1a1a;"></div>
<div class="btnp" style="left:132px;top:166.3px;width:20.8px;height:28.6px;"></div>
<span class="t" style="left:135.6px;top:181.1px;font-size:7.1px;"><u>P</u>lay</span>
<div class="btn" style="left:162.3px;top:166.3px;width:28.3px;height:28.6px;background:linear-gradient(#ffffff,#fbfbfa 60%,#efeeed);"></div>
<span class="t" style="left:166.6px;top:180.8px;font-size:7.1px;"><u>O</u>pen</span>
<div style="left:238px;top:60px;width:33px;height:9px;background:#edeceb;"></div>
<span class="t" style="left:239px;top:64.6px;font-weight:bold;font-size:7.4px;color:#000;">Cooling</span>
<div class="btn" style="left:247px;top:114.3px;width:14.5px;height:14.4px;"></div>
<svg style="left:250.25px;top:118.0px" width="8" height="7" viewBox="0 0 8 7"><rect x="0.6" y="0.6" width="6.8" height="5.8" fill="#cfcfcf" opacity="0.7"/><rect x="1" y="1" width="6" height="5" fill="#1e1e26"/><ellipse cx="4" cy="3.3" rx="1.5" ry="1.2" fill="#c23a2c"/><rect x="1.4" y="5" width="5.2" height="0.8" fill="#3a3f55"/></svg>
<div class="btn" style="left:247px;top:135.1px;width:14.5px;height:14.4px;"></div>
<svg style="left:250.25px;top:138.8px" width="8" height="7" viewBox="0 0 8 7"><rect x="0.6" y="0.6" width="6.8" height="5.8" fill="#cfcfcf" opacity="0.7"/><rect x="1" y="1" width="6" height="5" fill="#1e1e26"/><ellipse cx="4" cy="3.3" rx="1.5" ry="1.2" fill="#c23a2c"/><rect x="1.4" y="5" width="5.2" height="0.8" fill="#3a3f55"/></svg>
<div style="left:296px;top:60px;width:60px;height:9px;background:#edeceb;"></div>
<span class="t" style="left:297px;top:64.6px;font-weight:bold;font-size:7.4px;color:#000;">Spindle [rpm]</span>
<span class="t" style="left:291.5px;top:80.3px;font-weight:bold;font-size:10.7px;color:#000;line-height:14px;height:14px;margin-top:-7px;">S 3500</span>
<div class="btn" style="left:333.4px;top:72.3px;width:26px;height:15px;background:linear-gradient(#ffffff,#fbfbfa 60%,#efeeed);"></div>
<span class="t" style="left:336.6px;top:80.1px;font-size:7.1px;letter-spacing:-0.1px;">100%</span>
<span class="t" style="left:296.6px;top:93.1px;font-size:7.1px;">0</span>
<svg style="left:0px;top:0px" width="600" height="511" viewBox="0 0 600 511"><rect x="293" y="102.1" width="65.2" height="2.3" rx="1" fill="#e0deda" stroke="#b3b0ac" stroke-width="0.6"/><rect x="292.9" y="99.9" width="11.7" height="6.7" rx="2" fill="#fbfbfa" stroke="#aeaba7" stroke-width="0.7"/><path d="M296.6 102v2.7M298.4 102v2.7M300.2 102v2.7" stroke="#a3a19e" stroke-width="0.6" fill="none"/></svg>
<div style="left:291px;top:123.3px;width:20.2px;height:15.4px;background:#cbcac8;border:0.7px solid #8f8c88;"></div>
<div style="left:291.5px;top:135.6px;width:19.2px;height:0.9px;background:#d83a2e;"></div>
<span class="t" style="left:292.4px;top:135.9px;font-size:5.8px;color:#222;">0.0</span>
<div class="btn" style="left:318px;top:124px;width:14px;height:13.6px;background:linear-gradient(#cfcecc,#d8d7d5);border-color:#9a9793;"></div>
<svg style="left:321.0px;top:127.3px" width="8" height="7" viewBox="0 0 8 7"><rect x="0.6" y="0.6" width="6.8" height="5.8" fill="#cfcfcf" opacity="0.7"/><rect x="1" y="1" width="6" height="5" fill="#1e1e26"/><ellipse cx="4" cy="3.3" rx="1.5" ry="1.2" fill="#c23a2c"/><rect x="1.4" y="5" width="5.2" height="0.8" fill="#3a3f55"/></svg>
<div class="btn" style="left:342.5px;top:123.5px;width:14.4px;height:14.4px;"></div>
<svg style="left:345.7px;top:127.2px" width="8" height="7" viewBox="0 0 8 7"><rect x="0.6" y="0.6" width="6.8" height="5.8" fill="#cfcfcf" opacity="0.7"/><rect x="1" y="1" width="6" height="5" fill="#1e1e26"/><ellipse cx="4" cy="3.3" rx="1.5" ry="1.2" fill="#c23a2c"/><rect x="1.4" y="5" width="5.2" height="0.8" fill="#3a3f55"/></svg>
<div style="left:291px;top:166.2px;width:53px;height:13.5px;background:#c9c8c6;border:0.8px solid #8f8c88;"></div>
<span class="t" style="left:294.8px;top:173.0px;font-size:6px;color:#000;">0</span>
<span class="t" style="left:316px;top:173.0px;font-size:6px;color:#000;">0</span>
<span class="t" style="left:327.6px;top:173.0px;font-size:6px;color:#000;letter-spacing:-0.2px;">6000</span>
<div style="left:345.5px;top:166.2px;width:12.6px;height:12.6px;border-radius:50%;background:#0a6a12;border:0.8px solid #1a1a1a;"></div>
<svg style="left:271px;top:309px" width="8" height="12" viewBox="0 0 8 12"><path d="M0.8 0.8v9l2.2 -2l1.6 3.4l1.5 -0.7l-1.6 -3.3h3z" fill="#fdfdfd" stroke="#111" stroke-width="0.8" stroke-linejoin="round"/></svg>
<div style="left:383.3px;top:51.5px;width:1px;height:445px;background:#f6f5f4;"></div>
<div style="left:385px;top:52px;width:212.5px;height:14.5px;background:#fff;border:1px solid #aaa7a3;border-radius:2px;box-shadow:inset 0 1px 1px #e4e3e1;"></div>
<span class="t" style="left:388.6px;top:59.7px;font-style:italic;color:#8a8886;font-size:7.1px;">&lt; search widgets &gt;</span>
<div style="left:385px;top:67px;width:203px;height:94px;background:#fff;border:1px solid #b9b6b2;border-radius:1px;"></div>
<span class="t" style="left:489px;top:76.9px;font-size:7.1px;color:#000;">error-comp-led</span>
<span class="t" style="left:479.2px;top:89.5px;font-size:7.1px;color:#000;">hbox3</span>
<span class="t" style="left:489px;top:101.7px;font-size:7.1px;color:#000;">enable_comp</span>
<span class="t" style="left:489px;top:114.3px;font-size:7.1px;color:#000;">reset-comp</span>
<span class="t" style="left:469.5px;top:127.3px;font-size:7.1px;color:#000;">adj_comp_scale</span>
<span class="t" style="left:449.7px;top:139.5px;font-size:7.1px;color:#000;">label-comp</span>
<span class="t" style="left:439.9px;top:152.3px;font-size:7.1px;color:#000;">frm_cooling</span>
<span class="t" style="left:551.4px;top:139.3px;font-style:italic;color:#c4c2c0;font-size:7.1px;-webkit-text-stroke:0;">(label_iter</span>
<svg style="left:477px;top:73.3px" width="6.2" height="6.2" viewBox="0 0 6.2 6.2"><rect x="0.2" y="0.2" width="5.8" height="5.8" fill="#e22020" stroke="#c41a1a" stroke-width="0.4"/></svg>
<svg style="left:456px;top:86.6px" width="6" height="5" viewBox="0 0 6 5"><path d="M0.5 0.6h5l-2.5 3.6z" fill="#fff" stroke="#222" stroke-width="0.8" stroke-linejoin="round"/></svg>
<svg style="left:466px;top:85px" width="9" height="8" viewBox="0 0 9 8"><rect x="0.5" y="0.5" width="8" height="7" rx="1" fill="#fbfbfb" stroke="#777" stroke-width="0.7"/><path d="M3.2 0.5L3.2 7.5" stroke="#777" stroke-width="0.6" fill="none"/><path d="M5.8 0.5L5.8 7.5" stroke="#777" stroke-width="0.6" fill="none"/></svg>
<svg style="left:475.6px;top:98.7px" width="9" height="5" viewBox="0 0 9 5"><rect x="0.5" y="0.5" width="8" height="4" rx="1" fill="#f6f6f6" stroke="#555" stroke-width="0.7"/><rect x="2.6" y="1.8" width="3.8" height="1.4" fill="#444"/></svg>
<svg style="left:475.6px;top:111.3px" width="9" height="5" viewBox="0 0 9 5"><rect x="0.5" y="0.5" width="8" height="4" rx="1" fill="#f6f6f6" stroke="#555" stroke-width="0.7"/><rect x="3" y="2" width="3" height="1.2" fill="#666"/></svg>
<svg style="left:457.8px;top:122.4px" width="5" height="9" viewBox="0 0 5 9"><path d="M2.5 0.3L2.5 8.7" stroke="#666" stroke-width="0.7" fill="none"/><rect x="1.2" y="2.4" width="2.6" height="3.6" rx="1" fill="#fff" stroke="#444" stroke-width="0.6"/></svg>
<svg style="left:436px;top:136.4px" width="9" height="5" viewBox="0 0 9 5"><text x="4.5" y="4" font-size="3.6" font-weight="bold" fill="#222" text-anchor="middle" textLength="8">label</text></svg>
<svg style="left:416.8px;top:149.4px" width="6" height="5" viewBox="0 0 6 5"><path d="M0.5 0.6h5l-2.5 3.6z" fill="#fff" stroke="#222" stroke-width="0.8" stroke-linejoin="round"/></svg>
<svg style="left:426px;top:147px" width="9" height="8.4" viewBox="0 0 9 8.4"><rect x="0.6" y="0.5" width="7.8" height="7.4" rx="0.8" fill="#ededec" stroke="#8e8e8e" stroke-width="0.7"/></svg>
<div style="left:589px;top:67px;width:9px;height:94px;background:linear-gradient(90deg,#cfcdca,#dad8d5);border:1px solid #c6c4c1;border-radius:1.5px;"></div>
<div style="left:589px;top:67px;width:9px;height:8.5px;background:linear-gradient(90deg,#fdfdfd,#e9e8e6);border:1px solid #b4b1ad;border-radius:2px;"></div>
<svg style="left:591px;top:70.3px" width="4.5" height="3" viewBox="0 0 4.5 3"><path d="M0.4 2.6L2.25 0.6L4.1 2.6" stroke="#222" stroke-width="1" fill="none"/></svg>
<div style="left:589px;top:90px;width:9px;height:16.5px;background:linear-gradient(90deg,#abc7ec,#8db1e2 55%,#82a8dc);border:1px solid #7a9fd3;border-radius:1px;"></div>
<div style="left:592px;top:96.5px;width:3px;height:0.6px;background:#5f86bd;"></div>
<div style="left:592px;top:98.0px;width:3px;height:0.6px;background:#5f86bd;"></div>
<div style="left:592px;top:99.5px;width:3px;height:0.6px;background:#5f86bd;"></div>
<div style="left:589px;top:153px;width:9px;height:8px;background:linear-gradient(90deg,#fdfdfd,#e9e8e6);border:1px solid #b4b1ad;border-radius:2px;"></div>
<svg style="left:591px;top:155.2px" width="4.5" height="3" viewBox="0 0 4.5 3"><path d="M0.4 0.5L2.25 2.5L4.1 0.5" stroke="#222" stroke-width="1" fill="none"/></svg>
<div style="left:385px;top:162.2px;width:202.6px;height:8.5px;background:linear-gradient(#cfcdca,#dad8d5);border:1px solid #c6c4c1;border-radius:1.5px;"></div>
<div style="left:385px;top:162.2px;width:8.5px;height:8.5px;background:linear-gradient(#fdfdfd,#e9e8e6);border:1px solid #b4b1ad;border-radius:2px;"></div>
<svg style="left:387.8px;top:164.2px" width="3" height="4.5" viewBox="0 0 3 4.5"><path d="M2.5 0.4L0.6 2.25L2.5 4.1" stroke="#999" stroke-width="0.9" fill="none"/></svg>
<div style="left:393px;top:162.2px;width:134.5px;height:8.5px;background:linear-gradient(#abc7ec,#8db1e2 55%,#82a8dc);border:1px solid #7a9fd3;border-radius:1px;"></div>
<div style="left:457.5px;top:165.2px;width:0.6px;height:3px;background:#5f86bd;"></div>
<div style="left:459.0px;top:165.2px;width:0.6px;height:3px;background:#5f86bd;"></div>
<div style="left:460.5px;top:165.2px;width:0.6px;height:3px;background:#5f86bd;"></div>
<div style="left:579.3px;top:162.2px;width:8.3px;height:8.5px;background:linear-gradient(#fdfdfd,#e9e8e6);border:1px solid #b4b1ad;border-radius:2px;"></div>
<svg style="left:582.2px;top:164.2px" width="3" height="4.5" viewBox="0 0 3 4.5"><path d="M0.5 0.4L2.4 2.25L0.5 4.1" stroke="#222" stroke-width="1" fill="none"/></svg>
<div style="left:489px;top:172.2px;width:1px;height:1px;background:#c9c7c4;"></div>
<div style="left:491px;top:172.2px;width:1px;height:1px;background:#c9c7c4;"></div>
<div style="left:493px;top:172.2px;width:1px;height:1px;background:#c9c7c4;"></div>
<svg style="left:385.6px;top:176.5px" width="12" height="6" viewBox="0 0 12 6"><rect x="0.5" y="0.5" width="11" height="5" rx="1.3" fill="#e4e4e4" stroke="#555" stroke-width="0.7"/><text x="6" y="4.4" font-size="3.4" font-weight="bold" fill="#333" text-anchor="middle" >OK</text></svg>
<span class="t" style="left:399.6px;top:179.7px;font-size:7.1px;color:#000;">HAL_Button Properties - HAL_Button [reset-comp]</span>
<div style="left:385.5px;top:206.2px;width:212px;height:270px;border:1px solid #c4c2be;border-radius:1.5px;background:#efeeed;"></div>
<div style="left:420.3px;top:191.2px;width:33.8px;height:15.4px;border:1px solid #bdbab6;border-bottom:none;border-radius:2px 2px 0 0;background:linear-gradient(#ebeae8,#dddcda);"></div>
<span class="t" style="left:423.7px;top:199.9px;font-size:7.1px;color:#000;"><u>P</u>acking</span>
<div style="left:453.3px;top:191.2px;width:40.0px;height:15.4px;border:1px solid #bdbab6;border-bottom:none;border-radius:2px 2px 0 0;background:linear-gradient(#ebeae8,#dddcda);"></div>
<span class="t" style="left:457.2px;top:199.9px;font-size:7.1px;color:#000;"><u>C</u>ommon</span>
<div style="left:492.5px;top:191.2px;width:33.8px;height:15.4px;border:1px solid #bdbab6;border-bottom:none;border-radius:2px 2px 0 0;background:linear-gradient(#ebeae8,#dddcda);"></div>
<span class="t" style="left:496.3px;top:199.9px;font-size:7.1px;color:#000;"><u>S</u>ignals</span>
<div style="left:525.5px;top:191.2px;width:17.8px;height:15.4px;border:1px solid #bdbab6;border-bottom:none;border-radius:2px 2px 0 0;background:linear-gradient(#ebeae8,#dddcda);"></div>
<svg style="left:529.3px;top:194.5px" width="10" height="11" viewBox="0 0 10 11"><rect x="-0.2" y="0.2" width="9.6" height="9.8" fill="#fbfbfb"/><circle cx="4.3" cy="1.6" r="1.4" fill="#1f4fb0"/><path d="M4 3.2v3.4h3.2l1.4 3.4" stroke="#1f4fb0" stroke-width="1.4" fill="none"/><path d="M3 5.2a3 3 0 1 0 4.2 3.6" stroke="#1f4fb0" stroke-width="1.1" fill="none"/></svg>
<div style="left:385.5px;top:189.2px;width:35.4px;height:18px;border:1px solid #bdbab6;border-bottom:none;border-radius:2px 2px 0 0;background:#efeeed;border-top:1.5px solid #7ba4d9;"></div>
<span class="t" style="left:389.2px;top:199.1px;font-size:7.1px;color:#000;"><u>G</u>eneral</span>
<div style="left:389.9px;top:211px;width:202.5px;height:260px;border:1px solid #cfcdca;border-radius:1px;background:#f1f0ef;box-shadow:inset 0 0 0 0.6px #fbfbfa;"></div>
<div style="left:559.3px;top:479px;width:16.4px;height:16.4px;border:1px solid #c2c0bd;border-radius:2px;background:linear-gradient(#f6f5f4,#e9e8e6);"></div>
<svg style="left:563px;top:482.3px" width="10" height="10.4" viewBox="0 0 10 10.4"><rect x="0.5" y="0.5" width="9" height="9.6" rx="0.8" fill="#b4b2af"/><text x="5.2" y="7.8" font-size="6.6" font-weight="bold" fill="#f6f6f6" text-anchor="middle" >D</text></svg>
<div style="left:580px;top:479px;width:16.4px;height:16.4px;border:1px solid #c2c0bd;border-radius:2px;background:linear-gradient(#f6f5f4,#e9e8e6);"></div>
<svg style="left:583.6px;top:481.8px" width="9" height="11" viewBox="0 0 9 11"><path d="M6.6 0.6L4.4 5.6" stroke="#c4c2bf" stroke-width="1" fill="none"/><path d="M3 5.4l3 1.2l-0.6 3.6h-4.2z" fill="#d2d0cd" stroke="#bab8b5" stroke-width="0.5"/></svg>
<div style="left:593px;top:507px;width:1px;height:1px;background:#c9c7c4;"></div>
<div style="left:595px;top:505px;width:1px;height:1px;background:#c9c7c4;"></div>
<div style="left:597px;top:503px;width:1px;height:1px;background:#c9c7c4;"></div>
<div style="left:0px;top:496px;width:600px;height:14px;background:#edeceb;border-top:1px solid #e3e2e0;"></div>
<div style="left:0px;top:497px;width:590px;height:1px;background:#d9d7d4;"></div>
<div style="left:0px;top:510px;width:600px;height:1px;background:#6e6b68;"></div>
</body></html>
